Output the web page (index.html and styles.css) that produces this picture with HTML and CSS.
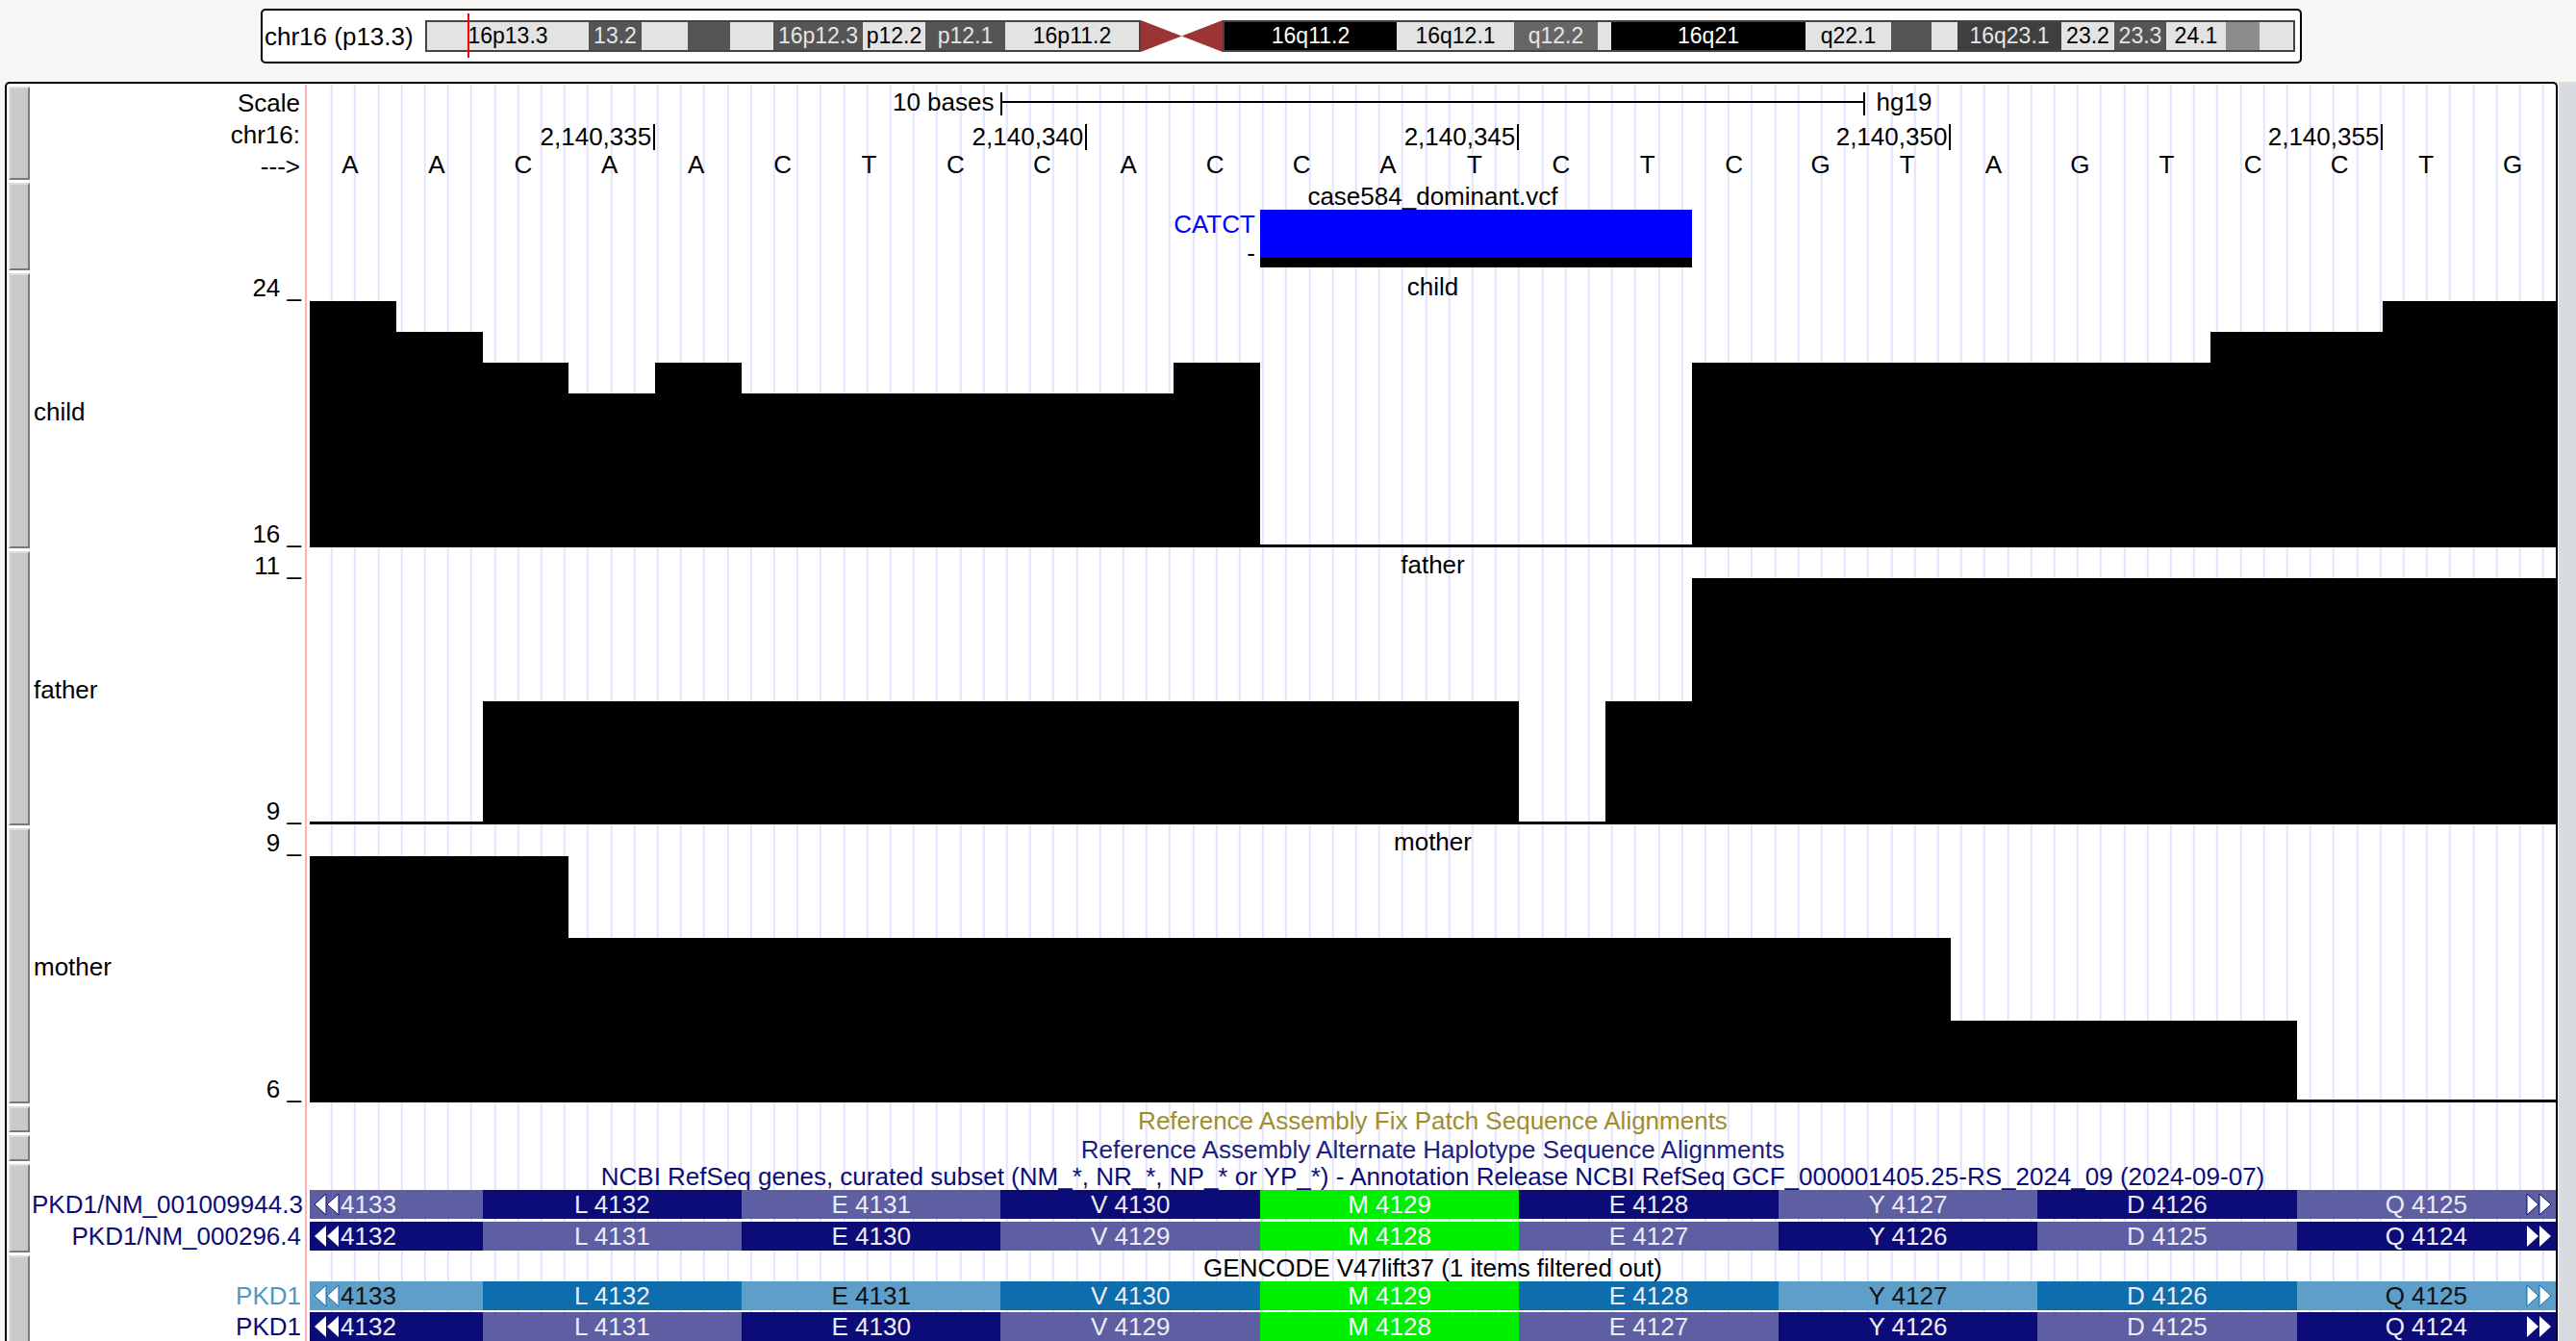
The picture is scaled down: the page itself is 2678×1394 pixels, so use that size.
FILE: index.html
```html
<!DOCTYPE html>
<html>
<head>
<meta charset="utf-8">
<title>UCSC Genome Browser - chr16</title>
<link rel="stylesheet" href="styles.css">
</head>
<body>
<div class="ideo">
  <span class="ideo-label">chr16 (p13.3)</span>
  <div class="chrom">
    <div class="arm arm-p">
      <div class="band" style="width:168px">16p13.3</div>
      <div class="band dk" style="width:55px">13.2</div>
      <div class="band" style="width:48px"></div>
      <div class="band dk" style="width:44px"></div>
      <div class="band" style="width:45px"></div>
      <div class="band dk" style="width:93px">16p12.3</div>
      <div class="band" style="width:65px">p12.2</div>
      <div class="band dk" style="width:83px">p12.1</div>
      <div class="band" style="width:139px">16p11.2</div>
    </div>
    <svg class="cen" width="85" height="33" viewBox="0 0 85 33"><polygon points="0,0 0,33 42.5,16.5" fill="#9b3535"/><polygon points="85,0 85,33 42.5,16.5" fill="#9b3535"/></svg>
    <div class="arm arm-q">
      <div class="band bk" style="width:179px">16q11.2</div>
      <div class="band" style="width:122px">16q12.1</div>
      <div class="band d6" style="width:87px">q12.2</div>
      <div class="band" style="width:14px"></div>
      <div class="band bk" style="width:202px">16q21</div>
      <div class="band" style="width:89px">q22.1</div>
      <div class="band dk" style="width:42px"></div>
      <div class="band" style="width:27px"></div>
      <div class="band d3" style="width:108px">16q23.1</div>
      <div class="band" style="width:55px">23.2</div>
      <div class="band dk" style="width:54px">23.3</div>
      <div class="band" style="width:62px">24.1</div>
      <div class="band gy" style="width:35px"></div>
      <div class="band" style="width:35px"></div>
    </div>
    <div class="marker"></div>
  </div>
</div>

<div class="main">
  <div class="panel">
    <div class="btns">
      <div class="r-ruler"><div class="btn btn-first"></div></div>
      <div class="r-vcf"><div class="btn"></div></div>
      <div class="r-child"><div class="btn"></div></div>
      <div class="r-father"><div class="btn"></div></div>
      <div class="r-mother"><div class="btn"></div></div>
      <div class="r-fix"><div class="btn"></div></div>
      <div class="r-alt"><div class="btn"></div></div>
      <div class="r-refseq"><div class="btn"></div></div>
      <div class="r-gencode"><div class="btn"></div></div>
    </div>

    <div class="labels">
      <div class="r-ruler rlab"><div>Scale</div><div>chr16:</div><div>---&gt;</div></div>
      <div class="r-vcf"></div>
      <div class="r-child wig-l"><span class="wname">child</span><div class="axis"><span>24 _</span><span>16 _</span></div></div>
      <div class="r-father wig-l"><span class="wname">father</span><div class="axis"><span>11 _</span><span>9 _</span></div></div>
      <div class="r-mother wig-l"><span class="wname">mother</span><div class="axis"><span>9 _</span><span>6 _</span></div></div>
      <div class="r-fix"></div>
      <div class="r-alt"></div>
      <div class="r-refseq glab">
        <div class="gl navy">PKD1/NM_001009944.3</div>
        <div class="gl navy gap3">PKD1/NM_000296.4</div>
      </div>
      <div class="r-gencode glab">
        <div class="gl ltblue">PKD1</div>
        <div class="gl navy gap2">PKD1</div>
      </div>
    </div>

    <div class="redline"></div>

    <div class="data">
      <div class="drow r-ruler ruler">
        <div class="grid26 scale">
          <span class="sc-lab">10 bases</span>
          <span class="sc-bar"></span>
          <span class="sc-asm">hg19</span>
        </div>
        <div class="grid26 pos">
          <span class="tick" style="grid-column:1/5">2,140,335</span>
          <span class="tick" style="grid-column:5/10">2,140,340</span>
          <span class="tick" style="grid-column:10/15">2,140,345</span>
          <span class="tick" style="grid-column:15/20">2,140,350</span>
          <span class="tick" style="grid-column:20/25">2,140,355</span>
        </div>
        <div class="grid26 bases">
          <span>A</span><span>A</span><span>C</span><span>A</span><span>A</span><span>C</span><span>T</span><span>C</span><span>C</span><span>A</span><span>C</span><span>C</span><span>A</span><span>T</span><span>C</span><span>T</span><span>C</span><span>G</span><span>T</span><span>A</span><span>G</span><span>T</span><span>C</span><span>C</span><span>T</span><span>G</span>
        </div>
      </div>

      <div class="drow r-vcf">
        <div class="ttl lh28">case584_dominant.vcf</div>
        <div class="grid26 vcf">
          <div class="vcf-lab"><span class="ref">CATCT</span><span>-</span></div>
          <div class="vcf-box"></div>
        </div>
      </div>

      <div class="drow r-child">
        <div class="ttl lh29">child</div>
        <div class="grid26 wig">
          <div class="bar" style="grid-column:span 1;height:256px"></div>
          <div class="bar" style="grid-column:span 1;height:224px"></div>
          <div class="bar" style="grid-column:span 1;height:192px"></div>
          <div class="bar" style="grid-column:span 1;height:160px"></div>
          <div class="bar" style="grid-column:span 1;height:192px"></div>
          <div class="bar" style="grid-column:span 5;height:160px"></div>
          <div class="bar" style="grid-column:span 1;height:192px"></div>
          <div class="bar floor" style="grid-column:span 5"></div>
          <div class="bar" style="grid-column:span 6;height:192px"></div>
          <div class="bar" style="grid-column:span 2;height:224px"></div>
          <div class="bar" style="grid-column:span 2;height:256px"></div>
        </div>
      </div>

      <div class="drow r-father">
        <div class="ttl lh28">father</div>
        <div class="grid26 wig">
          <div class="bar floor" style="grid-column:span 2"></div>
          <div class="bar" style="grid-column:span 12;height:128px"></div>
          <div class="bar floor" style="grid-column:span 1"></div>
          <div class="bar" style="grid-column:span 1;height:128px"></div>
          <div class="bar" style="grid-column:span 10;height:256px"></div>
        </div>
      </div>

      <div class="drow r-mother">
        <div class="ttl lh29">mother</div>
        <div class="grid26 wig">
          <div class="bar" style="grid-column:span 3;height:256px"></div>
          <div class="bar" style="grid-column:span 16;height:171px"></div>
          <div class="bar" style="grid-column:span 4;height:85px"></div>
          <div class="bar floor" style="grid-column:span 3"></div>
        </div>
      </div>

      <div class="drow r-fix"><div class="ttl lh30 olive">Reference Assembly Fix Patch Sequence Alignments</div></div>
      <div class="drow r-alt"><div class="ttl lh30 altc">Reference Assembly Alternate Haplotype Sequence Alignments</div></div>

      <div class="drow r-refseq">
        <div class="ttl lh27 navy">NCBI RefSeq genes, curated subset (NM_*, NR_*, NP_* or YP_*) - Annotation Release NCBI RefSeq GCF_000001405.25-RS_2024_09 (2024-09-07)</div>
        <div class="grid26 gene">
          <div class="seg first lp"><svg class="larr" width="28" height="24" viewBox="0 0 28 24"><polygon points="13,1 13,23 1,12" fill="#fff" stroke="#0c0c78" stroke-width="1"/><polygon points="26,1 26,23 14,12" fill="#fff" stroke="#0c0c78" stroke-width="1"/></svg>4133</div>
          <div class="seg nv">L 4132</div>
          <div class="seg lp">E 4131</div>
          <div class="seg nv">V 4130</div>
          <div class="seg gr">M 4129</div>
          <div class="seg nv">E 4128</div>
          <div class="seg lp">Y 4127</div>
          <div class="seg nv">D 4126</div>
          <div class="seg last lp">Q 4125<svg class="rarr" width="28" height="24" viewBox="0 0 28 24"><polygon points="2,1 2,23 14,12" fill="#fff" stroke="#0c0c78" stroke-width="1"/><polygon points="15,1 15,23 27,12" fill="#fff" stroke="#0c0c78" stroke-width="1"/></svg></div>
        </div>
        <div class="grid26 gene gap3">
          <div class="seg first nv"><svg class="larr" width="28" height="24" viewBox="0 0 28 24"><polygon points="13,1 13,23 1,12" fill="#fff"/><polygon points="26,1 26,23 14,12" fill="#fff"/></svg>4132</div>
          <div class="seg lp">L 4131</div>
          <div class="seg nv">E 4130</div>
          <div class="seg lp">V 4129</div>
          <div class="seg gr">M 4128</div>
          <div class="seg lp">E 4127</div>
          <div class="seg nv">Y 4126</div>
          <div class="seg lp">D 4125</div>
          <div class="seg last nv">Q 4124<svg class="rarr" width="28" height="24" viewBox="0 0 28 24"><polygon points="2,1 2,23 14,12" fill="#fff"/><polygon points="15,1 15,23 27,12" fill="#fff"/></svg></div>
        </div>
      </div>

      <div class="drow r-gencode">
        <div class="ttl lh27">GENCODE V47lift37 (1 items filtered out)</div>
        <div class="grid26 gene">
          <div class="seg first lb"><svg class="larr" width="28" height="24" viewBox="0 0 28 24"><polygon points="13,1 13,23 1,12" fill="#fff" stroke="#0d6dad" stroke-width="1"/><polygon points="26,1 26,23 14,12" fill="#fff" stroke="#0d6dad" stroke-width="1"/></svg>4133</div>
          <div class="seg bl">L 4132</div>
          <div class="seg lb">E 4131</div>
          <div class="seg bl">V 4130</div>
          <div class="seg gr">M 4129</div>
          <div class="seg bl">E 4128</div>
          <div class="seg lb">Y 4127</div>
          <div class="seg bl">D 4126</div>
          <div class="seg last lb">Q 4125<svg class="rarr" width="28" height="24" viewBox="0 0 28 24"><polygon points="2,1 2,23 14,12" fill="#fff" stroke="#0d6dad" stroke-width="1"/><polygon points="15,1 15,23 27,12" fill="#fff" stroke="#0d6dad" stroke-width="1"/></svg></div>
        </div>
        <div class="grid26 gene gap2">
          <div class="seg first nv"><svg class="larr" width="28" height="24" viewBox="0 0 28 24"><polygon points="13,1 13,23 1,12" fill="#fff"/><polygon points="26,1 26,23 14,12" fill="#fff"/></svg>4132</div>
          <div class="seg lp">L 4131</div>
          <div class="seg nv">E 4130</div>
          <div class="seg lp">V 4129</div>
          <div class="seg gr">M 4128</div>
          <div class="seg lp">E 4127</div>
          <div class="seg nv">Y 4126</div>
          <div class="seg lp">D 4125</div>
          <div class="seg last nv">Q 4124<svg class="rarr" width="28" height="24" viewBox="0 0 28 24"><polygon points="2,1 2,23 14,12" fill="#fff"/><polygon points="15,1 15,23 27,12" fill="#fff"/></svg></div>
        </div>
      </div>
    </div>
  </div>
  <div class="gutter"></div>
</div>
</body>
</html>
```

FILE: styles.css
```css
html, body {
  margin: 0;
  padding: 0;
  height: 100%;
  overflow: hidden;
}
body {
  background: #f6f6f4;
  font-family: "Liberation Sans", Arial, sans-serif;
  font-size: 26px;
  color: #000;
}

/* ---------- ideogram ---------- */
.ideo {
  margin: 9px 0 0 271px;
  width: 2122px;
  height: 57px;
  box-sizing: border-box;
  border: 2px solid #000;
  border-radius: 5px;
  background: #fff;
  display: flex;
  align-items: center;
  padding-left: 2px;
}
.ideo-label {
  flex: none;
  width: 167px;
  line-height: 30px;
  white-space: nowrap;
}
.chrom {
  position: relative;
  display: flex;
  height: 33px;
}
.arm {
  display: flex;
  height: 33px;
  box-sizing: border-box;
  border: 2px solid #444;
}
.arm-p { width: 744px; }
.arm-q { width: 1115px; }
.band {
  flex: none;
  height: 100%;
  display: flex;
  align-items: center;
  justify-content: center;
  font-size: 23px;
  white-space: nowrap;
  overflow: hidden;
  background: #e3e3e3;
  color: #000;
}
.band.dk { background: #555; color: #e6e6e6; }
.band.d3 { background: #3f3f3f; color: #e6e6e6; }
.band.d6 { background: #666; color: #e6e6e6; }
.band.bk { background: #000; color: #fff; }
.band.gy { background: #8c8c8c; }
.cen { display: block; flex: none; }
.marker {
  position: absolute;
  left: 44px;
  top: -7px;
  width: 2px;
  height: 46px;
  background: #f00;
}

/* ---------- main panel ---------- */
.main {
  display: flex;
  margin-top: 19px;
}
.panel {
  margin-left: 5px;
  width: 2654px;
  flex: none;
  box-sizing: border-box;
  border: 2px solid #000;
  border-bottom: none;
  border-radius: 5px 5px 0 0;
  background: #fff;
  padding-top: 1px;
  display: flex;
}
.gutter {
  flex: 1;
  margin-left: 1px;
  background: #d8dbdf;
}

/* row heights shared by all columns */
.r-ruler { height: 102px; }
.r-vcf { height: 94px; }
.r-child { height: 289px; }
.r-father { height: 288px; }
.r-mother { height: 289px; }
.r-fix { height: 30px; }
.r-alt { height: 30px; }
.r-refseq { height: 95px; }
.r-gencode { height: 95px; }

.btns {
  width: 26px;
  flex: none;
  display: flex;
  flex-direction: column;
}
.btn {
  height: calc(100% - 3px);
  margin: 0 2px 0 2px;
  box-sizing: border-box;
  background: #c9c9c9;
  border: 2px solid;
  border-color: #dedede #7a7a7a #7a7a7a #dcdcdc;
}
.btn-first {
  margin-top: 2px;
  height: calc(100% - 5px);
}

.labels {
  width: 284px;
  flex: none;
  display: flex;
  flex-direction: column;
}
.rlab {
  text-align: right;
  padding: 3px 5px 0 0;
  box-sizing: border-box;
  line-height: 33px;
}
.wig-l {
  display: flex;
  box-sizing: border-box;
}
.wname {
  flex: 1;
  align-self: center;
  padding-left: 2px;
}
.axis {
  display: flex;
  flex-direction: column;
  justify-content: space-between;
  text-align: right;
  padding: 0 4px 3px 0;
  line-height: 30px;
  white-space: nowrap;
}
.glab {
  box-sizing: border-box;
  padding: 27px 4px 0 0;
  text-align: right;
}
.gl {
  height: 30px;
  line-height: 30px;
  white-space: nowrap;
}
.gap3 { margin-top: 3px; }
.gap2 { margin-top: 2px; }
.navy { color: #0c0c78; }
.ltblue { color: #4f97c6; }

.redline {
  width: 2px;
  flex: none;
  background: #ffb0b0;
}

.data {
  width: 2338px;
  flex: none;
  display: flex;
  flex-direction: column;
  background-image: repeating-linear-gradient(90deg, transparent 0 22.2px, #e3e3ff 22.2px 24.2px);
  background-position: 2.8px 0;
}
.drow {
  box-sizing: border-box;
  padding-left: 3px;
}
.grid26 {
  display: grid;
  grid-template-columns: repeat(26, minmax(0, 1fr));
}
.ttl {
  text-align: center;
  white-space: nowrap;
}
.lh27 { line-height: 27px; height: 27px; }
.lh28 { line-height: 28px; height: 28px; }
.lh29 { line-height: 29px; height: 29px; }
.lh30 { line-height: 30px; height: 30px; }
.olive { color: #a08d2e; }
.altc { color: #20207e; }

/* ruler */
.ruler { padding-top: 2px; }
.scale { height: 32px; }
.sc-lab {
  grid-column: 1 / 9;
  justify-self: end;
  padding-right: 7px;
  line-height: 32px;
}
.sc-bar {
  grid-column: 9 / 19;
  align-self: end;
  height: 24px;
  margin-bottom: 2px;
  box-sizing: border-box;
  border-left: 2px solid #000;
  border-right: 2px solid #000;
  background: linear-gradient(#000, #000) 0 9px / 100% 2px no-repeat;
}
.sc-asm {
  grid-column: 19 / 27;
  padding-left: 12px;
  line-height: 32px;
}
.pos {
  height: 27px;
  margin-top: 7px;
}
.tick {
  justify-self: end;
  border-right: 2px solid #000;
  padding-right: 2px;
  line-height: 27px;
  white-space: nowrap;
}
.bases {
  height: 30px;
  line-height: 30px;
  text-align: center;
  margin-left: -3px;
}

/* vcf */
.vcf { height: 60px; }
.vcf-lab {
  grid-column: 1 / 12;
  justify-self: end;
  padding-right: 5px;
  display: flex;
  flex-direction: column;
  align-items: flex-end;
  line-height: 30px;
}
.ref { color: #0000ff; }
.vcf-box {
  grid-column: 12 / 17;
  height: 60px;
  box-sizing: border-box;
  background: #0000ff;
  border-bottom: 10px solid #000;
}

/* wiggle */
.wig {
  height: 256px;
  align-items: end;
}
.bar { background: #000; }
.bar.floor { height: 3px; }

/* genes */
.gene {
  height: 30px;
  line-height: 30px;
}
.seg {
  grid-column: span 3;
  text-align: center;
  white-space: nowrap;
  overflow: hidden;
  color: #ececf6;
}
.seg.first {
  grid-column: span 2;
  display: flex;
  align-items: center;
}
.seg.last { position: relative; }
.larr {
  flex: none;
  margin-left: 4px;
  display: block;
}
.rarr {
  position: absolute;
  right: 4px;
  top: 3px;
}
.nv { background: #0c0c78; }
.lp { background: #5e5ea3; }
.gr { background: #00ee00; color: #fff; }
.bl { background: #0d6dad; }
.lb { background: #5e9fc9; color: #111; }
```
